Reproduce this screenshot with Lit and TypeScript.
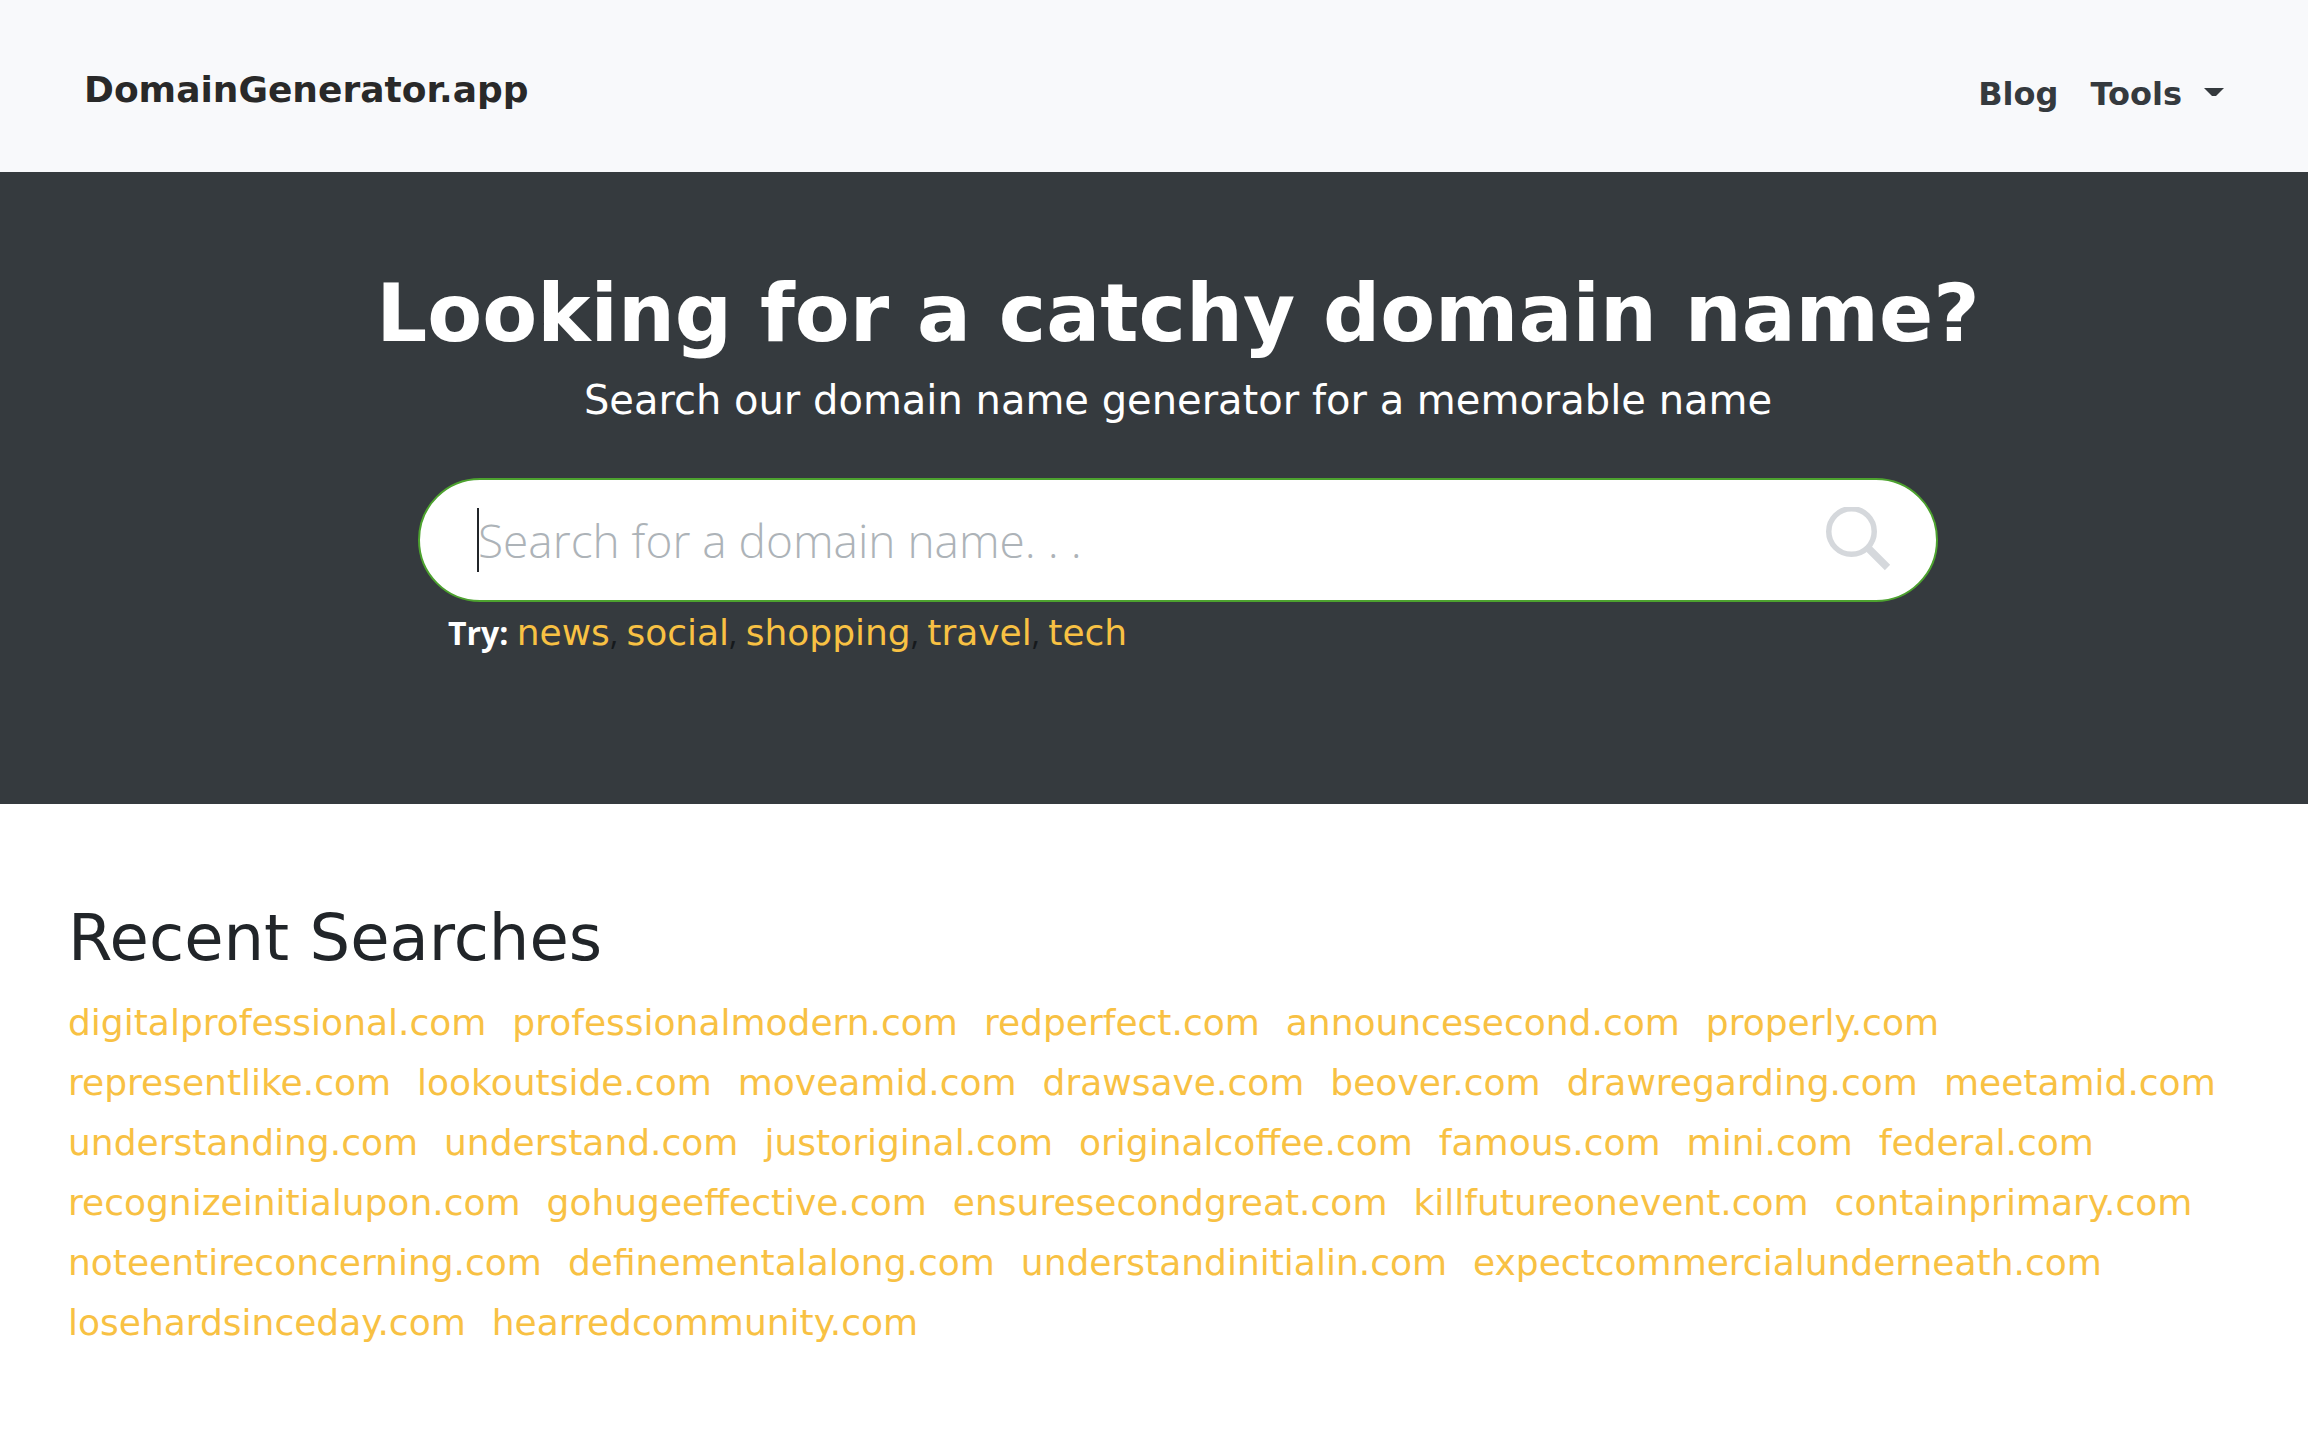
import { LitElement, html, css } from "lit";
import { customElement, state } from "lit/decorators.js";

const SUGGESTIONS = ["news", "social", "shopping", "travel", "tech"];

const RECENT = [
  "digitalprofessional.com", "professionalmodern.com", "redperfect.com", "announcesecond.com",
  "properly.com", "representlike.com", "lookoutside.com", "moveamid.com", "drawsave.com",
  "beover.com", "drawregarding.com", "meetamid.com", "understanding.com", "understand.com",
  "justoriginal.com", "originalcoffee.com", "famous.com", "mini.com", "federal.com",
  "recognizeinitialupon.com", "gohugeeffective.com", "ensuresecondgreat.com",
  "killfutureonevent.com", "containprimary.com", "noteentireconcerning.com",
  "definementalalong.com", "understandinitialin.com", "expectcommercialunderneath.com",
  "losehardsinceday.com", "hearredcommunity.com",
];

@customElement("site-header")
class SiteHeader extends LitElement {
  static styles = css`
    :host { display: block; }
    .bar {
      display: flex;
      justify-content: space-between;
      align-items: center;
      min-height: 172px;
      box-sizing: border-box;
      padding: 0 84px;
      background: #f8f9fb;
      font-family: Verdana, "DejaVu Sans", sans-serif;
      font-weight: 700;
    }
    .brand {
      color: #292929;
      font-size: 36px;
      line-height: 54px;
      padding-top: 8px;
      text-decoration: none;
    }
    .links { display: flex; gap: 32px; padding-top: 16px; }
    .link {
      display: flex;
      align-items: center;
      gap: 22px;
      border: 0;
      padding: 0;
      background: none;
      color: #353a3e;
      font: inherit;
      font-size: 32px;
      line-height: 48px;
      text-decoration: none;
      cursor: pointer;
    }
    .arrow { display: block; fill: #353a3e; margin-bottom: 4px; }
  `;
  render() {
    return html`
      <header class="bar">
        <a class="brand" href="#">DomainGenerator.app</a>
        <nav class="links">
          <a class="link" href="#blog">Blog</a>
          <button class="link" type="button" aria-haspopup="true">
            Tools
            <svg class="arrow" width="20" height="8" viewBox="0 0 20 8" aria-hidden="true">
              <path d="M0 0h20L12 8H8z" />
            </svg>
          </button>
        </nav>
      </header>
    `;
  }
}

@customElement("search-hero")
class SearchHero extends LitElement {
  @state() query = "";

  static styles = css`
    :host { display: block; }
    .hero {
      background: #353a3e;
      padding: 94px 0 144px 48px;
      font-family: Verdana, "DejaVu Sans", sans-serif;
      color: #fff;
    }
    .inner {
      max-width: 1520px;
      margin: 0 auto;
      display: flex;
      flex-direction: column;
    }
    .title {
      align-self: center;
      margin: 0 0 8px;
      font-size: 80px;
      line-height: 96px;
      font-weight: 700;
      text-align: center;
      white-space: nowrap;
    }
    .lead {
      margin: 0 0 48px;
      font-size: 40px;
      line-height: 60px;
      text-align: center;
    }
    .search {
      position: relative;
      display: flex;
      align-items: center;
      height: 124px;
      box-sizing: border-box;
      border: 2px solid #4da22f;
      border-radius: 62px;
      padding: 0 44px 0 58px;
      background: #fff;
    }
    .field {
      flex: 1;
      min-width: 0;
      border: 0;
      padding: 0;
      outline: 0;
      background: none;
      color: #212529;
      font: 300 46px/64px "Open Sans", sans-serif;
    }
    .field::placeholder { color: #adb3b8; opacity: 1; }
    .cursor {
      position: absolute;
      left: 57px;
      top: 28px;
      width: 2px;
      height: 64px;
      background: #212529;
    }
    .go { border: 0; padding: 0; background: none; cursor: pointer; }
    .glass { display: block; fill: none; stroke: #d5d8dc; }
    .try {
      margin: 4px 0 0;
      padding-left: 30px;
      font: 400 32px/54px "Open Sans", sans-serif;
      color: #16191c;
    }
    .label { font-weight: 700; color: #fff; }
    .pick {
      font: 400 36px/54px Verdana, "DejaVu Sans", sans-serif;
      color: #f8c143;
      text-decoration: none;
    }
  `;
  render() {
    return html`
      <section class="hero">
        <div class="inner">
          <h1 class="title">Looking for a catchy domain name?</h1>
          <p class="lead">Search our domain name generator for a memorable name</p>
          <form class="search" role="search" @submit=${(e: Event) => e.preventDefault()}>
            <input
              class="field"
              type="text"
              aria-label="Search for a domain name"
              placeholder="Search for a domain name. . ."
              .value=${this.query}
              @input=${(e: Event) => (this.query = (e.target as HTMLInputElement).value)}
            />
            ${this.query ? "" : html`<span class="cursor"></span>`}
            <button class="go" type="submit" aria-label="Search">
              <svg class="glass" width="66" height="66" viewBox="0 0 66 66" aria-hidden="true">
                <circle cx="25.5" cy="24.5" r="22.75" stroke-width="5.5" />
                <path d="M41 40L61.5 60.5" stroke-width="7.5" />
              </svg>
            </button>
          </form>
          <p class="try">
            <span class="label">Try:</span>
            ${SUGGESTIONS.map(
              (s, i) => html`<a class="pick" href="#${s}">${s}</a>${i < SUGGESTIONS.length - 1 ? ", " : ""}`
            )}
          </p>
        </div>
      </section>
    `;
  }
}

@customElement("recent-searches")
class RecentSearches extends LitElement {
  static styles = css`
    :host { display: block; }
    .recent {
      padding: 96px 68px;
      font-family: Verdana, "DejaVu Sans", sans-serif;
    }
    .title {
      margin: 0 0 16px;
      font-size: 64px;
      line-height: 77px;
      font-weight: 400;
      color: #212529;
    }
    .list {
      display: flex;
      flex-wrap: wrap;
      column-gap: 26px;
      margin: 0;
      padding: 0;
      list-style: none;
    }
    .item {
      font-size: 36px;
      line-height: 60px;
      color: #f8c143;
      text-decoration: none;
    }
  `;
  render() {
    return html`
      <section class="recent">
        <h2 class="title">Recent Searches</h2>
        <ul class="list">
          ${RECENT.map((d) => html`<li><a class="item" href="#${d}">${d}</a></li>`)}
        </ul>
      </section>
    `;
  }
}

@customElement("app-root")
class AppRoot extends LitElement {
  static styles = css`
    :host { display: block; background: #fff; }
  `;
  render() {
    return html`
      <site-header></site-header>
      <main>
        <search-hero></search-hero>
        <recent-searches></recent-searches>
      </main>
    `;
  }
}
